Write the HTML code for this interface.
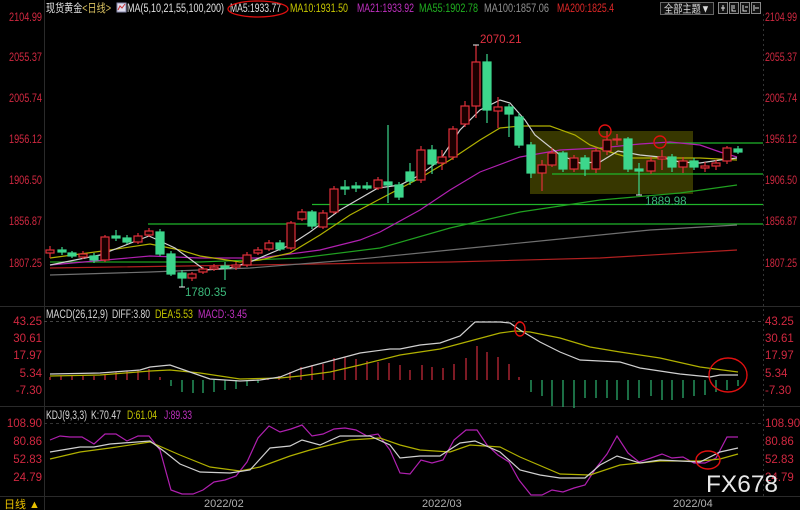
<!DOCTYPE html>
<html><head><meta charset="utf-8"><style>
html,body{margin:0;padding:0;background:#000;width:800px;height:510px;overflow:hidden}
svg{display:block}
text{font-family:"Liberation Sans","Noto Sans CJK SC",sans-serif;font-size:11.5px}
</style></head><body>
<svg width="800" height="510" viewBox="0 0 800 510" xmlns="http://www.w3.org/2000/svg">
<rect width="800" height="510" fill="#000"/>
<g stroke="#2a2a2a" stroke-width="1">
<line x1="44.5" y1="0" x2="44.5" y2="510"/>
<line x1="0" y1="306.5" x2="800" y2="306.5"/>
<line x1="0" y1="406.5" x2="800" y2="406.5"/>
<line x1="0" y1="496.5" x2="800" y2="496.5"/>
</g>
<line x1="763.5" y1="14" x2="763.5" y2="496" stroke="#333" stroke-dasharray="2,3"/>
<line x1="44" y1="321.5" x2="763" y2="321.5" stroke="#444" stroke-dasharray="3,3"/>
<line x1="44" y1="423.5" x2="763" y2="423.5" stroke="#333" stroke-dasharray="3,3"/>

<!-- header -->
<g style="font-size:11.5px">
<text x="46" y="12" fill="#e0e0e0" textLength="65" lengthAdjust="spacingAndGlyphs">现货黄金<tspan fill="#d8c060">&lt;日线&gt;</tspan></text>
<text x="127" y="12" fill="#e0e0e0" textLength="97" lengthAdjust="spacingAndGlyphs">MA(5,10,21,55,100,200)</text>
<text x="230" y="12" fill="#e0e0e0" textLength="51" lengthAdjust="spacingAndGlyphs">MA5:1933.77</text>
<text x="290" y="12" fill="#c8c800" textLength="58" lengthAdjust="spacingAndGlyphs">MA10:1931.50</text>
<text x="357" y="12" fill="#c030c0" textLength="57" lengthAdjust="spacingAndGlyphs">MA21:1933.92</text>
<text x="419" y="12" fill="#20b020" textLength="59" lengthAdjust="spacingAndGlyphs">MA55:1902.78</text>
<text x="484" y="12" fill="#909090" textLength="65" lengthAdjust="spacingAndGlyphs">MA100:1857.06</text>
<text x="557" y="12" fill="#e02828" textLength="57" lengthAdjust="spacingAndGlyphs">MA200:1825.4</text>
</g>
<rect x="117" y="3" width="9" height="9" fill="#dde" stroke="#88a"/>
<path d="M118 10 L120 6 L122 8 L125 4" stroke="#c33" fill="none"/>
<ellipse cx="258" cy="9" rx="30" ry="8" fill="none" stroke="#e01010" stroke-width="1.3"/>
<rect x="660.5" y="2.5" width="53" height="12" fill="#111" stroke="#666"/>
<text x="664" y="12.5" fill="#ddd" style="font-size:11px" textLength="46" lengthAdjust="spacingAndGlyphs">全部主题▼</text>
<g fill="#111" stroke="#888"><rect x="718.5" y="2.5" width="9" height="11"/><rect x="729.5" y="2.5" width="9" height="11"/><rect x="740.5" y="2.5" width="9" height="11"/><rect x="751.5" y="2.5" width="9" height="11"/></g>
<g stroke="#ddd" fill="none"><path d="M721 8h4M723 5v6"/><path d="M732 5v6h4M734 5v4"/><path d="M743 5v6h4M745 7h3"/><path d="M754 5v6M755 8h4"/></g>

<!-- axis labels -->
<g fill="#d02840" style="font-size:11.5px">
<text x="9" y="21" textLength="33" lengthAdjust="spacingAndGlyphs">2104.99</text>
<text x="9" y="61" textLength="33" lengthAdjust="spacingAndGlyphs">2055.37</text>
<text x="9" y="102" textLength="33" lengthAdjust="spacingAndGlyphs">2005.74</text>
<text x="9" y="143" textLength="33" lengthAdjust="spacingAndGlyphs">1956.12</text>
<text x="9" y="184" textLength="33" lengthAdjust="spacingAndGlyphs">1906.50</text>
<text x="9" y="225" textLength="33" lengthAdjust="spacingAndGlyphs">1856.87</text>
<text x="9" y="267" textLength="33" lengthAdjust="spacingAndGlyphs">1807.25</text>
<text x="765" y="21" textLength="32" lengthAdjust="spacingAndGlyphs">2104.99</text>
<text x="765" y="61" textLength="32" lengthAdjust="spacingAndGlyphs">2055.37</text>
<text x="765" y="102" textLength="32" lengthAdjust="spacingAndGlyphs">2005.74</text>
<text x="765" y="143" textLength="32" lengthAdjust="spacingAndGlyphs">1956.12</text>
<text x="765" y="184" textLength="32" lengthAdjust="spacingAndGlyphs">1906.50</text>
<text x="765" y="225" textLength="32" lengthAdjust="spacingAndGlyphs">1856.87</text>
<text x="765" y="267" textLength="32" lengthAdjust="spacingAndGlyphs">1807.25</text>
<text x="42" y="325" text-anchor="end">43.25</text>
<text x="42" y="342" text-anchor="end">30.61</text>
<text x="42" y="359" text-anchor="end">17.97</text>
<text x="42" y="377" text-anchor="end">5.34</text>
<text x="42" y="394" text-anchor="end">-7.30</text>
<text x="765" y="325">43.25</text>
<text x="765" y="342">30.61</text>
<text x="765" y="359">17.97</text>
<text x="765" y="377">5.34</text>
<text x="765" y="394">-7.30</text>
<text x="42" y="427" text-anchor="end">108.90</text>
<text x="42" y="445" text-anchor="end">80.86</text>
<text x="42" y="463" text-anchor="end">52.83</text>
<text x="42" y="481" text-anchor="end">24.79</text>
<text x="765" y="427">108.90</text>
<text x="765" y="445">80.86</text>
<text x="765" y="463">52.83</text>
<text x="765" y="481">24.79</text>
</g>

<rect x="530" y="131" width="163" height="63" fill="#4a4a00" fill-opacity="0.75"/>

<g stroke="#1fb52a" stroke-width="1.3">
<line x1="148" y1="224" x2="763" y2="224"/>
<line x1="312" y1="204.5" x2="763" y2="204.5"/>
<line x1="552" y1="174" x2="763" y2="174"/>
<line x1="666" y1="143" x2="763" y2="143"/>
</g>

<g fill="none" stroke-width="1.2">
<polyline stroke="#b02020" points="50,268 250,265 450,262 600,258 737,250"/>
<polyline stroke="#707070" points="50,275 150,272 250,268 350,260 450,250 550,240 650,230 737,225"/>
<polyline stroke="#20a020" points="50,262 200,262 300,258 380,248 450,228 520,212 600,200 680,193 737,185"/>
<polyline stroke="#b020b0" points="50,265 150,256 200,258 260,258 320,250 360,240 380,232 420,210 450,190 480,172 520,157 560,150 600,148 640,144 670,142 700,145 720,152 737,157"/>
<polyline stroke="#b0b000" points="50,258 110,250 150,244 180,250 200,256 240,262 260,260 290,253 320,235 350,215 378,200 420,178 450,160 480,140 500,128 520,126 550,126 575,135 590,145 610,152 630,158 660,158 700,158 737,160"/>
<polyline stroke="#d0d0d0" points="50,265 100,255 149,236 175,248 205,270 230,268 250,262 290,245 310,232 340,210 378,188 400,185 420,175 440,160 460,130 480,110 500,100 510,103 525,120 535,135 560,155 580,163 600,162 618,151 640,155 660,157 680,162 700,163 720,160 737,158"/>
</g>

<g stroke="#e0303a" fill="#1a0000" stroke-width="1.2">
<path d="M50 246V258M83 251V259M105 235V262M138 233V244M149 228V237M192 272V281M203 267V274M214 264V271M236 262V270M247 252V267M258 247V255M269 240V251M291 221V250M302 209V221M323 210V229M334 186V214M378 177V190M421 146V183M442 150V170M453 126V160M465 101V127M476 45V118M498 97V128M542 160V191M552 148V167M574 155V172M596 148V173M607 131V155M617 134V145M651 157V174M662 150V170M683 157V173M705 162V172M716 160V170M727 146V164"/>
<rect x="46" y="250" width="8" height="3"/><rect x="79" y="254" width="8" height="3"/><rect x="101" y="237" width="8" height="23"/><rect x="134" y="236" width="8" height="6"/><rect x="145" y="231" width="8" height="4"/><rect x="188" y="274" width="8" height="4"/><rect x="199" y="269" width="8" height="3"/><rect x="210" y="267" width="8" height="2"/><rect x="232" y="265" width="8" height="2"/><rect x="243" y="255" width="8" height="10"/><rect x="254" y="250" width="8" height="3"/><rect x="265" y="243" width="8" height="6"/><rect x="287" y="223" width="8" height="25"/><rect x="298" y="212" width="8" height="7"/><rect x="319" y="213" width="8" height="14"/><rect x="330" y="189" width="8" height="23"/><rect x="374" y="180" width="8" height="8"/><rect x="417" y="150" width="8" height="30"/><rect x="438" y="157" width="8" height="6"/><rect x="449" y="129" width="8" height="28"/><rect x="461" y="106" width="8" height="18"/><rect x="472" y="62" width="8" height="44"/><rect x="494" y="107" width="8" height="4"/><rect x="538" y="165" width="8" height="8"/><rect x="548" y="153" width="8" height="12"/><rect x="570" y="158" width="8" height="11"/><rect x="592" y="151" width="8" height="18"/><rect x="603" y="140" width="8" height="11"/><rect x="613" y="139" width="8" height="1"/><rect x="647" y="161" width="8" height="10"/><rect x="658" y="157" width="8" height="2"/><rect x="679" y="161" width="8" height="6"/><rect x="701" y="166" width="8" height="2"/><rect x="712" y="163" width="8" height="3"/><rect x="723" y="148" width="8" height="13"/>
</g>
<g stroke="#3dd68c" fill="#3dd68c" stroke-width="1.2">
<path d="M62 247V255M72 251V258M94 253V263M116 230V241M127 235V244M160 229V256M171 251V276M182 270V287M225 262V280M280 240V251M312 210V229M345 180V195M356 182V192M367 182V190M388 125V203M399 182V200M410 163V185M432 145V174M487 54V123M509 104V137M519 113V148M531 142V178M563 151V172M585 155V176M628 137V172M639 163V195M672 154V172M694 158V170M738 146V154"/>
<rect x="58" y="250" width="8" height="2"/><rect x="68" y="253" width="8" height="3"/><rect x="90" y="256" width="8" height="4"/><rect x="112" y="236" width="8" height="2"/><rect x="123" y="238" width="8" height="4"/><rect x="156" y="232" width="8" height="22"/><rect x="167" y="254" width="8" height="20"/><rect x="178" y="273" width="8" height="5"/><rect x="221" y="266" width="8" height="2"/><rect x="276" y="243" width="8" height="6"/><rect x="308" y="212" width="8" height="14"/><rect x="341" y="187" width="8" height="2"/><rect x="352" y="186" width="8" height="2"/><rect x="363" y="186" width="8" height="2"/><rect x="384" y="182" width="8" height="3"/><rect x="395" y="185" width="8" height="12"/><rect x="406" y="172" width="8" height="9"/><rect x="428" y="150" width="8" height="14"/><rect x="483" y="62" width="8" height="48"/><rect x="505" y="107" width="8" height="7"/><rect x="515" y="117" width="8" height="28"/><rect x="527" y="145" width="8" height="28"/><rect x="559" y="153" width="8" height="16"/><rect x="581" y="158" width="8" height="11"/><rect x="624" y="139" width="8" height="30"/><rect x="635" y="169" width="8" height="2"/><rect x="668" y="157" width="8" height="10"/><rect x="690" y="161" width="8" height="6"/><rect x="734" y="149" width="8" height="3"/>
</g>
<g stroke="#eee"><path d="M473 45h6M179 287h6M636 195h6"/></g>
<text x="480" y="43" fill="#e03040">2070.21</text>
<text x="645" y="205" fill="#3bb87a">1889.98</text>
<text x="185" y="296" fill="#3bb87a">1780.35</text>
<g fill="none" stroke="#e01010" stroke-width="1.4">
<circle cx="605" cy="131" r="6"/><circle cx="660" cy="142" r="6"/>
</g>

<!-- MACD -->
<g style="font-size:11.5px">
<text x="46" y="318" fill="#d8d8d8" textLength="62" lengthAdjust="spacingAndGlyphs">MACD(26,12,9)</text>
<text x="112" y="318" fill="#d8d8d8" textLength="38" lengthAdjust="spacingAndGlyphs">DIFF:3.80</text>
<text x="155" y="318" fill="#c8c800" textLength="38" lengthAdjust="spacingAndGlyphs">DEA:5.53</text>
<text x="198" y="318" fill="#c030c0" textLength="49" lengthAdjust="spacingAndGlyphs">MACD:-3.45</text>
</g>
<g stroke="#c02838" stroke-width="1.3">
<path d="M50 380V377M61 380V376M72 380V375M83 380V376M94 380V376M105 380V374M116 380V372M127 380V371M138 380V370M149 380V369M160 380V377M268 380V378M279 380V376M290 380V372M301 380V367M312 380V365M323 380V364M334 380V358M345 380V357M356 380V359M367 380V361M378 380V362M389 380V363M400 380V365M410 380V370M422 380V365M432 380V367M443 380V368M454 380V364M466 380V358M477 380V346M487 380V352M498 380V357M509 380V364M519 380V377"/>
</g>
<g stroke="#2aa868" stroke-width="1.3">
<path d="M171 380V386M182 380V392M193 380V393M203 380V393M214 380V392M225 380V390M236 380V389M247 380V386M258 380V383M531 380V392M542 380V396M552 380V406M563 380V407M574 380V408M585 380V398M596 380V398M607 380V398M617 380V400M628 380V400M639 380V398M651 380V396M662 380V400M672 380V400M683 380V398M694 380V396M705 380V395M716 380V392M727 380V390M738 380V386"/>
</g>
<g fill="none" stroke-width="1.2">
<polyline stroke="#b0b000" points="50,376 100,375 150,371 170,370 200,373 240,379 280,378 300,376 330,372 360,365 400,355 440,349 470,341 500,333 515,331 530,332 560,338 590,347 620,352 660,358 700,367 738,372"/>
<polyline stroke="#d0d0d0" points="50,374 100,373 140,370 150,367 170,365 190,372 210,379 240,381 260,380 280,377 300,369 330,361 360,353 390,349 400,349 420,345 440,343 460,336 475,322 500,322 510,323 520,330 540,342 560,352 580,360 600,361 620,362 640,368 660,371 680,374 700,376 710,377 720,375 738,375"/>
</g>
<g fill="none" stroke="#e01010" stroke-width="1.4">
<ellipse cx="520" cy="329" rx="5" ry="7"/>
<ellipse cx="728" cy="375" rx="19" ry="17"/>
</g>

<!-- KDJ -->
<g style="font-size:11.5px">
<text x="46" y="419" fill="#d8d8d8" textLength="41" lengthAdjust="spacingAndGlyphs">KDJ(9,3,3)</text>
<text x="91" y="419" fill="#d8d8d8" textLength="30" lengthAdjust="spacingAndGlyphs">K:70.47</text>
<text x="127" y="419" fill="#c8c800" textLength="30" lengthAdjust="spacingAndGlyphs">D:61.04</text>
<text x="164" y="419" fill="#c030c0" textLength="28" lengthAdjust="spacingAndGlyphs">J:89.33</text>
</g>
<g fill="none" stroke-width="1.2">
<polyline stroke="#b020b0" points="50,440 60,436 70,437 82,437 94,444 105,434 116,434 127,441 138,436 149,436 160,450 171,490 182,494 193,494 203,490 214,482 225,480 236,476 247,462 258,438 269,426 280,432 291,429 302,425 312,436 323,434 334,429 345,428 356,430 367,436 378,434 390,450 400,473 410,474 421,460 432,463 443,460 454,440 466,430 477,430 487,445 498,455 509,462 519,480 531,495 542,495 552,490 563,492 574,488 585,485 596,468 607,454 617,436 628,453 639,462 651,458 662,454 672,458 683,457 694,463 705,463 716,458 727,437 738,437"/>
<polyline stroke="#b0b000" points="50,459 80,452 110,448 150,442 180,455 210,467 240,471 260,467 290,456 310,450 350,440 380,438 400,445 420,450 450,452 470,445 500,447 520,457 560,474 590,475 620,465 660,461 700,461 720,459 738,454"/>
<polyline stroke="#d0d0d0" points="50,452 80,447 94,447 110,444 150,441 165,452 180,464 200,472 230,473 250,470 270,448 290,446 302,440 320,445 340,436 370,436 390,445 400,458 420,456 440,456 460,443 475,441 500,452 520,470 540,475 560,478 585,478 600,465 617,456 640,463 660,460 700,462 720,452 738,448"/>
</g>
<ellipse cx="708" cy="460" rx="12" ry="9" fill="none" stroke="#e01010" stroke-width="1.4"/>
<text x="706" y="492" fill="#e8e8e8" style="font-size:24px" textLength="72" lengthAdjust="spacingAndGlyphs">FX678</text>

<!-- bottom -->
<text x="4" y="508" fill="#e8c000" style="font-size:11px">日线 ▲</text>
<text x="204" y="507" fill="#b0b0b0" style="font-size:11px">2022/02</text>
<text x="422" y="507" fill="#b0b0b0" style="font-size:11px">2022/03</text>
<text x="673" y="507" fill="#b0b0b0" style="font-size:11px">2022/04</text>
</svg>
</body></html>
